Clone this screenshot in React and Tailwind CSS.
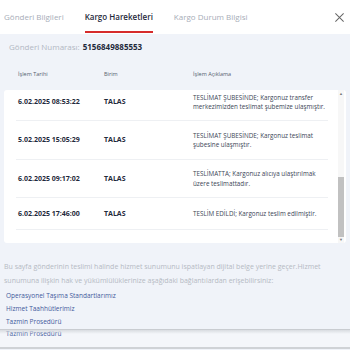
export default function App() {
  const rows = [
    ["6.02.2025 08:53:22", "TALAS", "TESLİMAT ŞUBESİNDE; Kargonuz transfer merkezimizden teslimat şubemize ulaşmıştır.", "h-[31px] pb-[6px]"],
    ["5.02.2025 15:05:29", "TALAS", "TESLİMAT ŞUBESİNDE; Kargonuz teslimat şubesine ulaşmıştır.", "h-[39px]"],
    ["6.02.2025 09:17:02", "TALAS", "TESLİMATTA; Kargonuz alıcıya ulaştırılmak üzere teslimattadır.", "h-[38px]"],
    ["6.02.2025 17:46:00", "TALAS", "TESLİM EDİLDİ; Kargonuz teslim edilmiştir.", "h-[32px]"],
  ];
  return (
    <div className="w-[350px] h-[350px] overflow-hidden bg-[#f0f3f9] text-[#1f2a3c]" style={{ fontFamily: '"Open Sans", "Noto Sans", sans-serif' }}>
      <div className="bg-white h-[34px] flex items-stretch relative pl-[4px]">
        <div className="flex items-center text-[8px] text-[#a7adb8] mr-[21px]">Gönderi Bilgileri</div>
        <div className="flex flex-col justify-center relative text-[8px] font-semibold text-[#1f2a3c] mr-[21px]">
          <span>Kargo Hareketleri</span>
          <div className="absolute left-0 right-0 bottom-[1px] h-[2px] bg-[#d62b2b]" />
        </div>
        <div className="flex items-center text-[8px] text-[#a7adb8]">Kargo Durum Bilgisi</div>
        <div className="ml-auto mr-[5px] flex items-center">
          <svg width="11" height="11" viewBox="0 0 12 12" stroke="#666" strokeWidth="1.1"><path d="M1.5 1.5L10.5 10.5M10.5 1.5L1.5 10.5" /></svg>
        </div>
      </div>
      <div className="px-[9px] pt-[7px] text-[8px] flex items-baseline">
        <span className="text-[#b2b8c3]">Gönderi Numarası:</span>
        <span className="ml-[3px] font-bold text-[8px] text-[#1f2a3c]">5156849885553</span>
      </div>
      <div className="flex text-[5.5px] text-[#55606f] mt-[17px] pl-[18px]">
        <div className="w-[86px]">İşlem Tarihi</div>
        <div className="w-[89px]">Birim</div>
        <div>İşlem Açıklama</div>
      </div>
      <div className="mx-[4px] mt-[12px] bg-white rounded-[3px] flex h-[153px] relative">
        <div className="flex-1 pl-[12px] pr-[10px]">
          {rows.map(([d, b, t, h], i) => (
            <div key={i} className={`flex items-center border-b border-[#eef0f3] pl-[2px] ${h}`}>
              <div className="w-[86px] text-[7px] font-bold text-[#1f2a3c]">{d}</div>
              <div className="w-[89px] text-[7px] font-bold text-[#1f2a3c]">{b}</div>
              <div className="w-[134px] text-[6.3px] leading-[9.5px] text-[#3c4656]">{t}</div>
            </div>
          ))}
        </div>
        <div className="w-[6px] mr-[2px] flex flex-col items-center bg-[#f7f7f7]">
          <div className="text-[4px] text-[#777] leading-[6px] mt-[1px]">▲</div>
          <div className="flex-1 w-full relative">
            <div className="absolute left-0 right-0 top-[80px] h-[60px] bg-[#c1c1c1]" />
          </div>
          <div className="text-[4px] text-[#777] leading-[6px]">▼</div>
        </div>
      </div>
      <div className="pl-[4px] pr-[24px] mt-[17px] text-[7px] leading-[14px] text-[#b5bac3]">
        Bu sayfa gönderinin teslimi halinde hizmet sunumunu ispatlayan dijital belge yerine geçer.Hizmet sunumuna ilişkin hak ve yükümlülüklerinize aşağıdaki bağlantılardan erişebilirsiniz:
      </div>
      <div className="px-[6px] mt-[1px] text-[6.5px] leading-[13px] text-[#3f5a9c] flex flex-col">
        <span>Operasyonel Taşıma Standartlarımız</span>
        <span>Hizmet Taahhütlerimiz</span>
        <span>Tazmin Prosedürü</span>
      </div>
      <div className="relative mt-[1px] h-[20px] border-t border-[#c9ccd1] border-b-2 border-b-[#cfd2d6] bg-[#f4f6fa] overflow-hidden px-[6px]">
        <div className="text-[6.5px] leading-[13px] text-[#3f5a9c] -mt-[3px]">Tazmin Prosedürü</div>
        <div className="absolute left-0 right-0 top-0 h-[4px] bg-gradient-to-b from-[#d9dce1] to-transparent" />
      </div>
    </div>
  );
}
